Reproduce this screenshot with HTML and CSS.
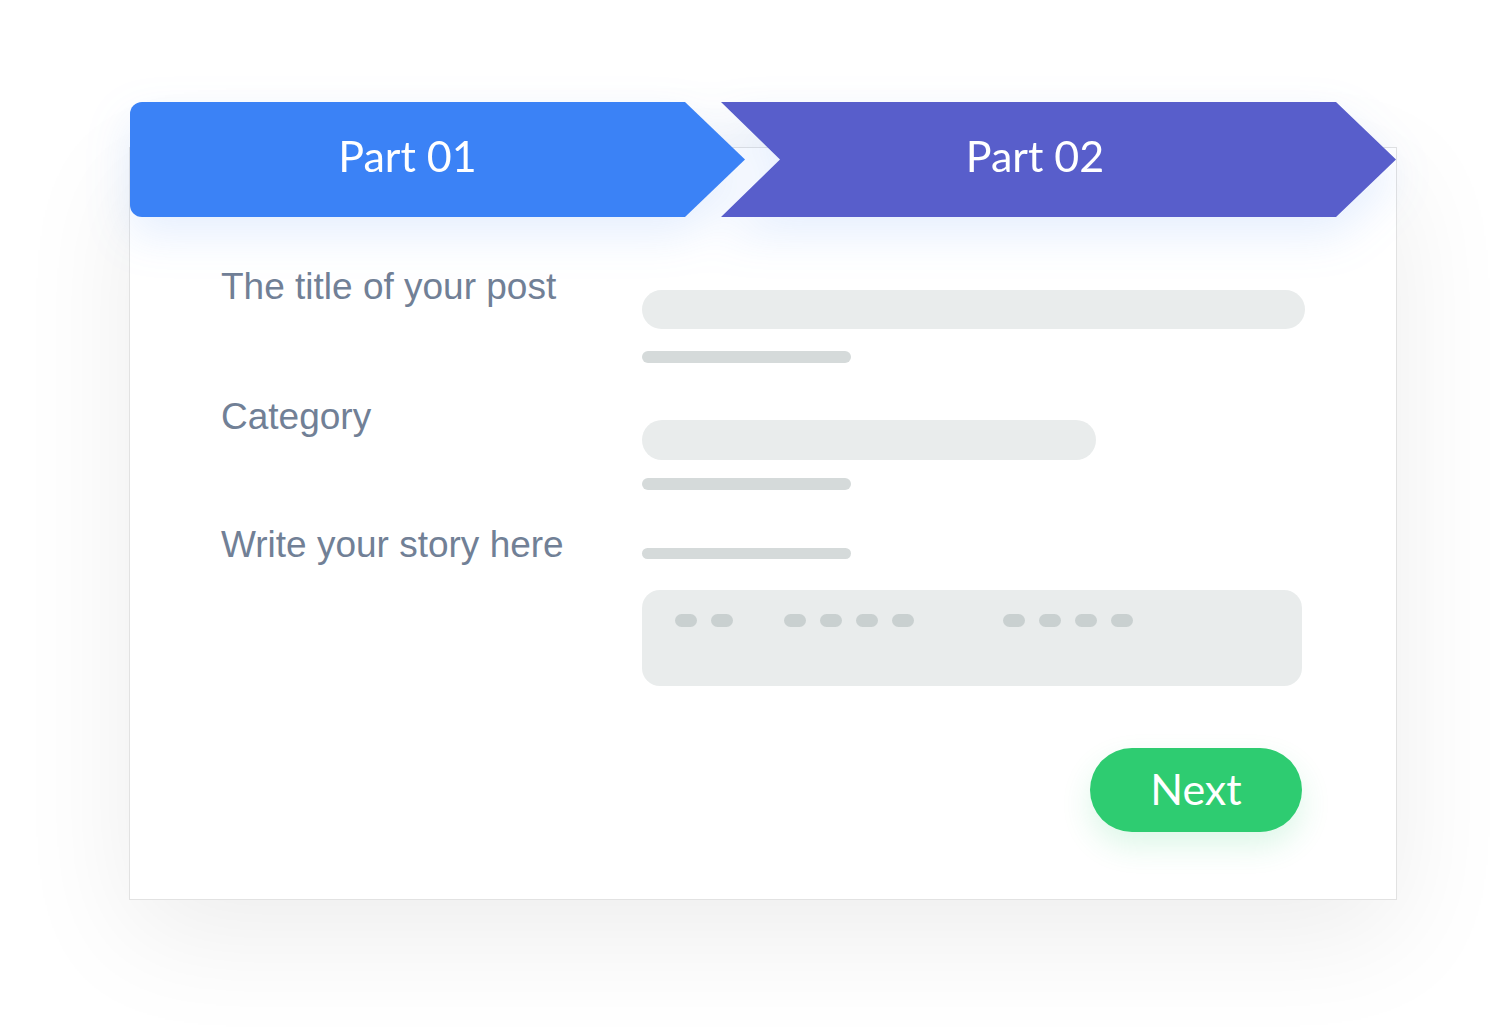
FILE: index.html
```html
<!DOCTYPE html>
<html lang="en">
<head>
<meta charset="utf-8">
<title>Post wizard</title>
<link rel="stylesheet" href="styles.css">
</head>
<body>
<div class="card">
  <div class="steps">
    <div class="step step-one">Part 01</div>
    <div class="step step-two">Part 02</div>
  </div>
  <div class="form">
    <div class="row row-title">
      <div class="label">The title of your post</div>
      <div class="fields">
        <div class="input input-wide"></div>
        <div class="hint"></div>
      </div>
    </div>
    <div class="row row-category">
      <div class="label">Category</div>
      <div class="fields">
        <div class="input input-mid"></div>
        <div class="hint"></div>
      </div>
    </div>
    <div class="row row-story">
      <div class="label">Write your story here</div>
      <div class="fields">
        <div class="hint"></div>
        <div class="textarea">
          <div class="dots">
            <span class="dot"></span><span class="dot"></span>
          </div>
          <div class="dots">
            <span class="dot"></span><span class="dot"></span><span class="dot"></span><span class="dot"></span>
          </div>
          <div class="dots">
            <span class="dot"></span><span class="dot"></span><span class="dot"></span><span class="dot"></span>
          </div>
        </div>
      </div>
    </div>
    <div class="actions">
      <button class="next" type="button">Next</button>
    </div>
  </div>
</div>
</body>
</html>
```

FILE: styles.css
```css
html, body {
  margin: 0;
  padding: 0;
  background: #ffffff;
}

body {
  width: 1500px;
  height: 1028px;
  overflow: hidden;
  font-family: "Liberation Sans", Arial, sans-serif;
}

.card {
  box-sizing: border-box;
  width: 1268px;
  height: 753px;
  margin: 147px 0 0 129px;
  border: 1px solid #e2e2e2;
  background: #ffffff;
  box-shadow: 0 34px 110px rgba(0, 0, 0, 0.075);
}

.steps {
  display: flex;
  height: 115px;
  margin-top: -46px;
  filter: drop-shadow(0 18px 22px rgba(59, 130, 246, 0.13));
}

.step {
  height: 115px;
  display: flex;
  align-items: center;
  justify-content: center;
  box-sizing: border-box;
  padding-bottom: 8px;
  color: #ffffff;
  font-family: Lato, "Open Sans", sans-serif;
  font-size: 43px;
  font-weight: 400;
}

.step-one {
  width: 615px;
  padding-right: 60px;
  background: #3b82f6;
  border-radius: 12px 0 0 12px;
  clip-path: polygon(0 0, 555px 0, 100% 50%, 555px 100%, 0 100%);
}

.step-two {
  width: 675px;
  margin-left: -24px;
  padding-right: 47px;
  background: #585ecb;
  clip-path: polygon(0 0, 615px 0, 100% 50%, 615px 100%, 0 100%, 59px 50%);
}

.form {
  display: flex;
  flex-direction: column;
  padding: 47px 0 0 91px;
}

.row {
  display: flex;
  align-items: flex-start;
}

.label {
  width: 421px;
  flex: none;
  padding-top: 1px;
  font-size: 37px;
  line-height: 44px;
  color: #718096;
}

.row-category .label,
.row-story .label { padding-top: 2px; }

.fields {
  width: 663px;
  display: flex;
  flex-direction: column;
}

.row-title .fields { padding-top: 26px; }
.row-category { margin-top: 30px; }
.row-category .fields { padding-top: 27px; }
.row-story { margin-top: 31px; }
.row-story .fields { padding-top: 27px; }

.input {
  height: 39px;
  border-radius: 20px;
  background: #e9ecec;
}

.input-wide { width: 663px; }
.input-mid { width: 454px; height: 40px; }

.hint {
  width: 209px;
  height: 12px;
  margin-top: 22px;
  border-radius: 6px;
  background: #d5dada;
}

.row-category .hint { margin-top: 18px; }
.row-story .hint { margin-top: 0; height: 11px; }

.textarea {
  box-sizing: border-box;
  width: 660px;
  height: 96px;
  margin-top: 31px;
  padding: 24px 0 0 33px;
  border-radius: 18px;
  background: #e9ecec;
  display: flex;
  align-items: flex-start;
}

.dots {
  display: flex;
  gap: 14px;
}

.dots + .dots { margin-left: 51px; }
.dots:last-child { margin-left: 89px; }

.dot {
  width: 22px;
  height: 13px;
  border-radius: 7px;
  background: #c9d0d0;
}

.actions {
  display: flex;
  justify-content: flex-end;
  width: 1081px;
  margin-top: 62px;
}

.next {
  width: 212px;
  height: 84px;
  border: none;
  border-radius: 42px;
  background: #2ecc71;
  color: #ffffff;
  font-family: Lato, "Open Sans", sans-serif;
  font-size: 43px;
  font-weight: 400;
  padding: 0 0 4px 0;
  box-shadow: 0 14px 30px rgba(46, 204, 113, 0.16);
  cursor: pointer;
}
```
